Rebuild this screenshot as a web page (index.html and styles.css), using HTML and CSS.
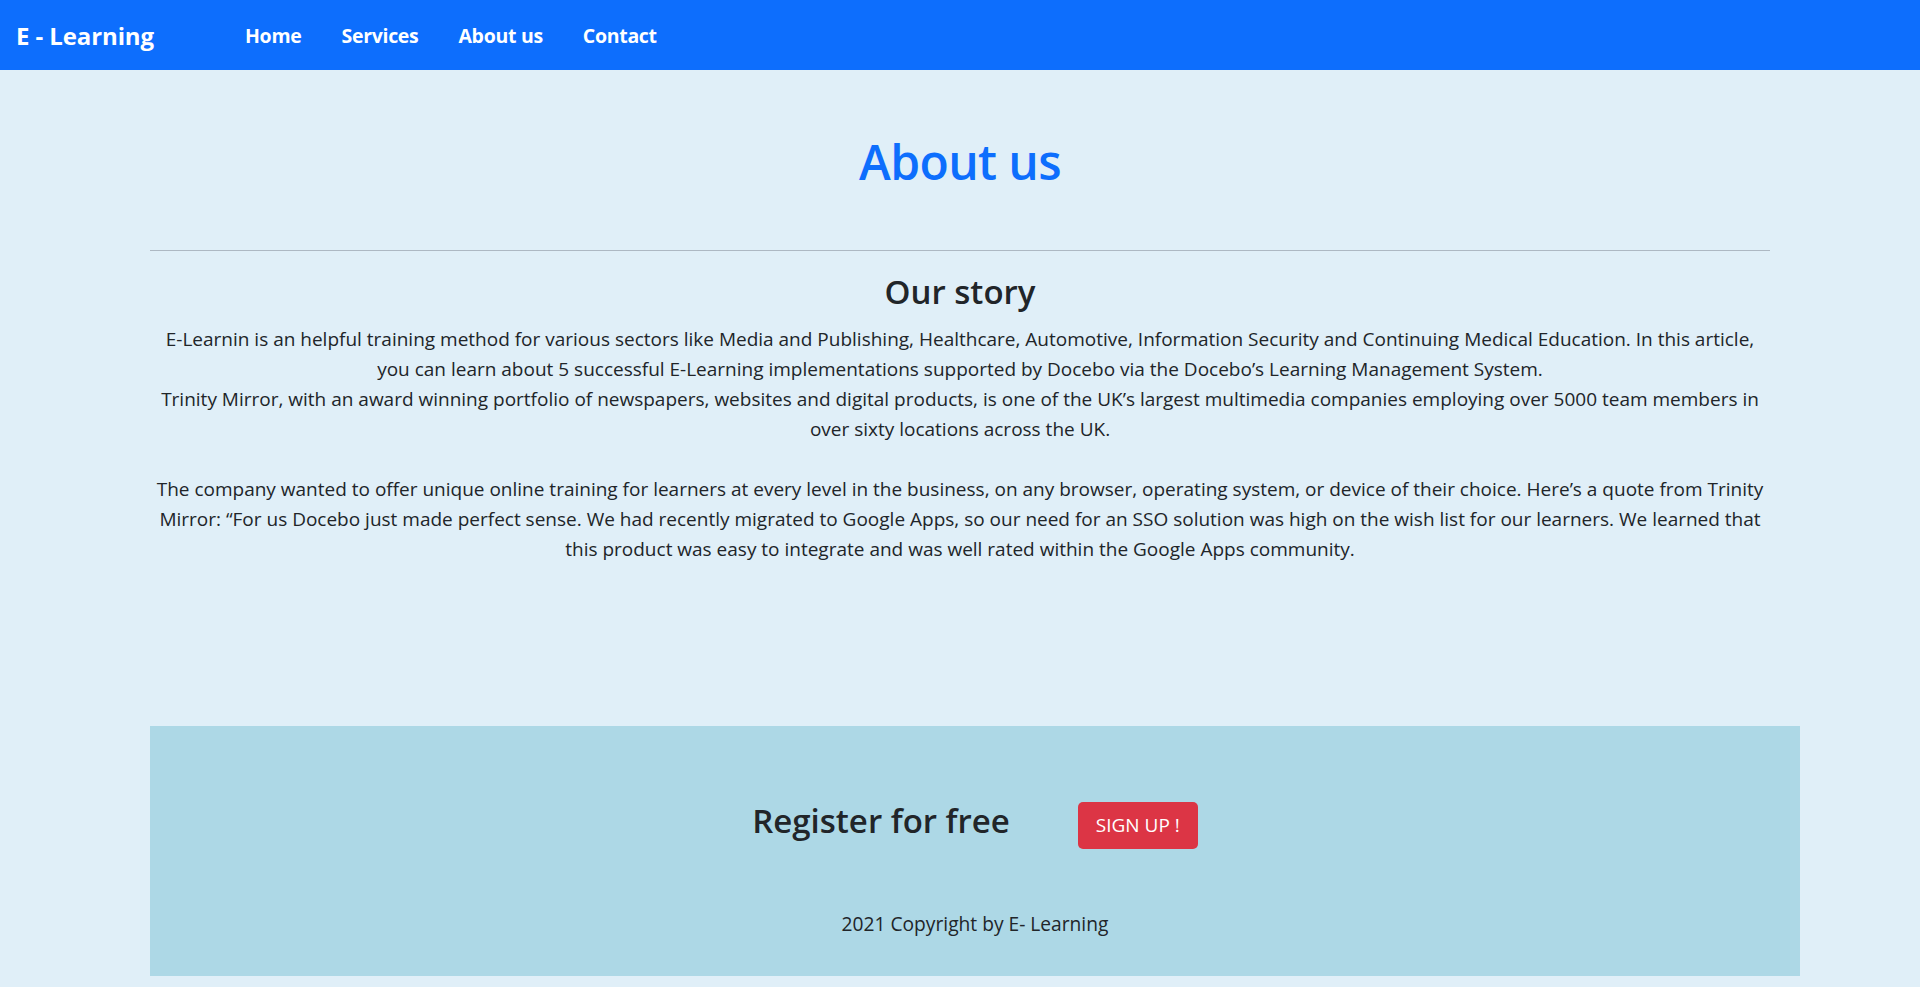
FILE: index.html
```html
<!DOCTYPE html>
<html lang="en">
<head>
<meta charset="utf-8">
<title>About us - E - Learning</title>
<link rel="stylesheet" href="styles.css">
</head>
<body>
<nav class="navbar">
  <a class="brand" href="#">E - Learning</a>
  <ul class="nav">
    <li><a class="nav-link" href="#">Home</a></li>
    <li><a class="nav-link" href="#">Services</a></li>
    <li><a class="nav-link" href="#">About us</a></li>
    <li><a class="nav-link" href="#">Contact</a></li>
  </ul>
</nav>
<main class="about">
  <h1 class="title">About us</h1>
  <hr class="divider">
  <section class="story">
    <h2 class="story-title">Our story</h2>
    <p class="lead">E-Learnin is an helpful training method for various sectors like Media and Publishing, Healthcare, Automotive, Information Security and Continuing Medical Education. In this article, you can learn about 5 successful E-Learning implementations supported by Docebo via the Docebo’s Learning Management System.<br>Trinity Mirror, with an award winning portfolio of newspapers, websites and digital products, is one of the UK’s largest multimedia companies employing over 5000 team members in over sixty locations across the UK.</p>
    <p class="lead">The company wanted to offer unique online training for learners at every level in the business, on any browser, operating system, or device of their choice. Here’s a quote from Trinity Mirror: “For us Docebo just made perfect sense. We had recently migrated to Google Apps, so our need for an SSO solution was high on the wish list for our learners. We learned that this product was easy to integrate and was well rated within the Google Apps community.</p>
  </section>
</main>
<footer class="cta">
  <div class="register">
    <h2 class="register-title">Register for free</h2>
    <a class="btn-signup" href="#">SIGN UP !</a>
  </div>
  <p class="copyright">2021 Copyright by E- Learning</p>
</footer>
</body>
</html>
```
FILE: styles.css
```css
* { box-sizing: border-box; }
html, body { margin: 0; padding: 0; }
body {
  background: #e0eff8;
  color: #212529;
  font-family: "Open Sans", "Noto Sans", "Liberation Sans", sans-serif;
  min-height: 987px;
}
a { text-decoration: none; }

.navbar {
  height: 70px;
  background: #0d6efd;
  display: flex;
  align-items: center;
  padding: 0 0 0 16px;
}
.brand {
  color: #fff;
  font-weight: 700;
  font-size: 24px;
  letter-spacing: -0.1px;
  margin-right: 71px;
}
.nav {
  list-style: none;
  margin: 0;
  padding: 0;
  display: flex;
}
.nav-link {
  display: block;
  color: #fff;
  font-weight: 700;
  font-size: 19.5px;
  letter-spacing: -0.3px;
  padding: 0 20px;
}

.about {
  margin: 0 150px;
  padding-top: 62px;
}
.title {
  margin: 0;
  text-align: center;
  color: #0d6efd;
  font-weight: 600;
  font-size: 48px;
  letter-spacing: -0.6px;
  line-height: 60px;
}
.divider {
  margin: 58px 0 0;
  border: 0;
  border-top: 1px solid #adb8c3;
}
.story { text-align: center; }
.story-title {
  margin: 21px 0 0;
  font-weight: 600;
  font-size: 33px;
  line-height: 40px;
}
.lead {
  margin: 0;
  font-size: 19px;
  font-weight: 400;
  line-height: 30px;
}
.story-title + .lead { margin-top: 12px; }
.lead + .lead { margin-top: 30px; }

.cta {
  margin: 162px 120px 0 150px;
  height: 250px;
  background: #add8e6;
  padding-top: 75px;
  text-align: center;
}
.register {
  display: flex;
  justify-content: center;
  align-items: center;
  gap: 68px;
}
.register-title {
  margin: 0 0 8px;
  font-size: 33px;
  font-weight: 600;
  line-height: 40px;
}
.btn-signup {
  display: inline-block;
  background: #dc3545;
  color: #fff;
  font-size: 19px;
  line-height: 31px;
  padding: 8px 18px;
  border-radius: 5px;
}
.copyright {
  margin: 61px 0 0;
  font-size: 19.2px;
  line-height: 28px;
}
```
